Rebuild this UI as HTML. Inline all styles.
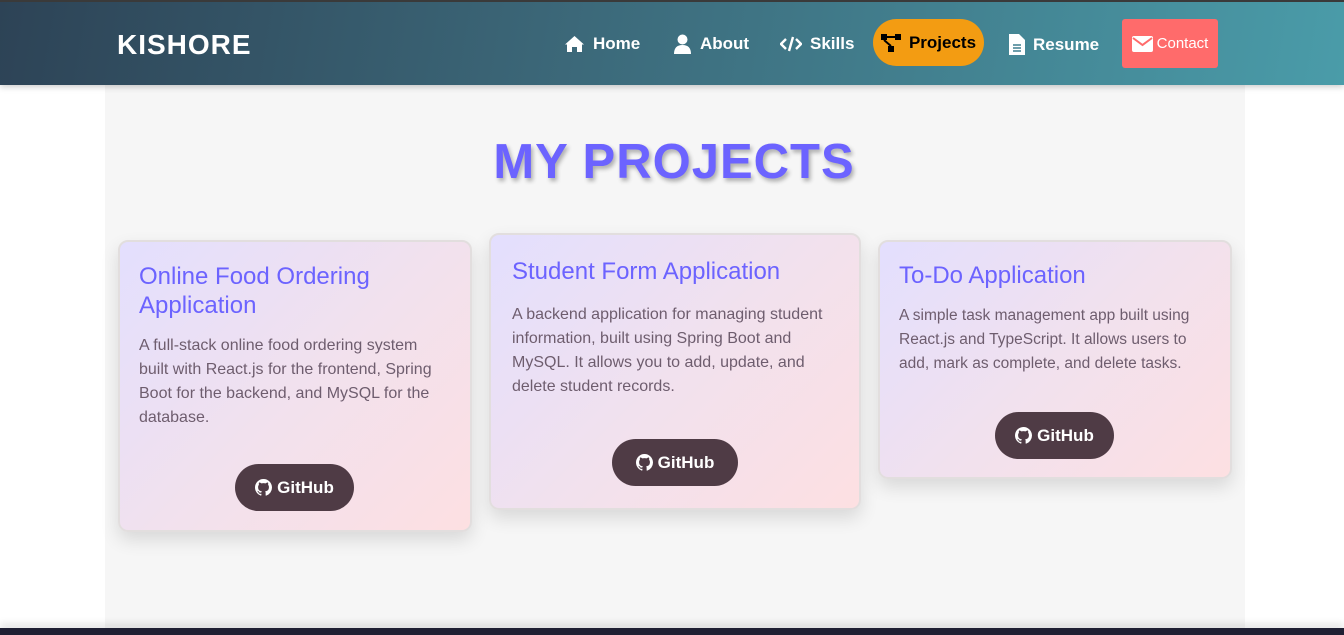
<!DOCTYPE html>
<html><head><meta charset="utf-8"><style>
*{box-sizing:border-box;margin:0;padding:0}
body{width:1344px;height:635px;overflow:hidden;background:#fff;font-family:"Liberation Sans",Arial,sans-serif;position:relative}
.hdr{position:absolute;left:0;top:0;width:1344px;height:85px;border-top:2px solid #3a3a3a;background:linear-gradient(100deg,#2d4356 0%,#3b6677 40%,#4a9ca9 100%);box-shadow:0 2px 6px rgba(0,0,0,.2);z-index:2}
.logo{position:absolute;left:117px;top:27px;color:#fff;font-weight:bold;font-size:28px;letter-spacing:1px}
.ni{position:absolute;display:flex;align-items:center;gap:8px;top:32px;color:#fff;font-weight:bold;font-size:17px}
.proj{position:absolute;left:873px;top:17px;width:111px;height:47px;background:#f39c12;border-radius:24px;color:#000;font-weight:bold;font-size:17px;display:flex;align-items:center;justify-content:center;gap:8px}
.cont{position:absolute;left:1122px;top:17px;width:96px;height:49px;background:#ff6b6b;border-radius:3px;color:#fff;font-size:15px;display:flex;align-items:center;justify-content:center;gap:4px}
.panel{position:absolute;left:105px;top:85px;width:1140px;height:543px;background:#f6f6f6}
.bot{position:absolute;left:0;top:628px;width:1344px;height:7px;background:#1f1f33;box-shadow:0 -4px 8px rgba(0,0,0,.12)}
h1{position:absolute;left:0;width:1348px;top:134px;text-align:center;font-size:49px;font-weight:bold;color:#6c63ff;letter-spacing:1px;text-shadow:2px 3px 4px rgba(0,0,0,.3)}
.card{position:absolute;border:2px solid #e2dede;border-radius:10px;background:linear-gradient(135deg,#e3dffe 0%,#f1e1ee 50%,#fde0e2 100%);box-shadow:0 8px 18px rgba(0,0,0,.12);padding:0 20px 0 19px}
.card h2{font-weight:normal;font-size:24px;color:#6c63ff;line-height:29px}
.card p{font-size:16px;line-height:24px;color:#6e5d6e}
.btn{position:absolute;height:47px;background:#4f3b45;border-radius:24px;color:#fff;font-weight:bold;font-size:17px;display:flex;align-items:center;justify-content:center;gap:5px}
</style></head><body>
<div class="hdr">
<div class="logo">KISHORE</div>
<div class="ni" style="left:564px"><svg width="21" height="18" viewBox="0 0 21 18"><path d="M10.5 1 L1 9.5 L3 9.5 L3 17 L8 17 L8 12 L13 12 L13 17 L18 17 L18 9.5 L20 9.5 Z" fill="#fff"/></svg>Home</div>
<div class="ni" style="left:673px"><svg width="19" height="20" viewBox="0 0 19 20"><circle cx="9.5" cy="5.5" r="5" fill="#fff"/><path d="M1 20 Q1 11 9.5 11 Q18 11 18 20Z" fill="#fff"/></svg>About</div>
<div class="ni" style="left:780px"><svg width="22" height="16" viewBox="0 0 22 16"><path d="M6 3 L1 8 L6 13 M16 3 L21 8 L16 13 M13 1 L9 15" stroke="#fff" stroke-width="2.4" fill="none"/></svg>Skills</div>
<div class="proj"><svg width="20" height="18" viewBox="0 0 20 18"><rect x="0" y="0" width="6" height="6" fill="#000"/><rect x="14" y="0" width="6" height="6" fill="#000"/><rect x="7" y="12" width="6" height="6" fill="#000"/><path d="M6 3 H14 M3 6 L10 12" stroke="#000" stroke-width="2"/></svg>Projects</div>
<div class="ni" style="left:1009px"><svg width="16" height="21" viewBox="0 0 16 21"><path d="M0 0 H10 L16 6 V21 H0Z" fill="#fff"/><path d="M4 11 H12 M4 14 H12 M4 17 H12" stroke="#3f7f8f" stroke-width="1.5"/></svg>Resume</div>
<div class="cont"><svg width="21" height="16" viewBox="0 0 21 16"><rect width="21" height="16" rx="2" fill="#fff"/><path d="M1 2 L10.5 9 L20 2" stroke="#ff6b6b" stroke-width="2" fill="none"/></svg>Contact</div>
</div>
<div class="panel"></div>
<div class="bot"></div>
<h1>MY PROJECTS</h1>
<div class="card" style="left:118px;top:240px;width:354px;height:292px;padding-top:20px">
<h2>Online Food Ordering Application</h2>
<p style="margin-top:14px">A full-stack online food ordering system built with React.js for the frontend, Spring Boot for the backend, and MySQL for the database.</p>
<div class="btn" style="left:115px;top:222px;width:119px"><svg width="17" height="17" viewBox="0 0 16 16"><path fill="#fff" d="M8 0C3.58 0 0 3.58 0 8c0 3.54 2.29 6.53 5.47 7.59.4.07.55-.17.55-.38v-1.33c-2.23.48-2.7-1.07-2.7-1.07-.36-.92-.89-1.17-.89-1.17-.73-.5.06-.49.06-.49.8.06 1.23.83 1.23.83.71 1.23 1.87.87 2.33.66.07-.52.28-.87.5-1.07-1.78-.2-3.64-.89-3.64-3.95 0-.87.31-1.59.82-2.15-.08-.2-.36-1.02.08-2.12 0 0 .67-.21 2.2.82.64-.18 1.32-.27 2-.27.68 0 1.36.09 2 .27 1.53-1.04 2.2-.82 2.2-.82.44 1.1.16 1.92.08 2.12.51.56.82 1.27.82 2.15 0 3.07-1.87 3.75-3.65 3.95.29.25.54.73.54 1.48v2.2c0 .21.15.46.55.38A8.01 8.01 0 0016 8c0-4.42-3.58-8-8-8z"/></svg>GitHub</div>
</div>
<div class="card" style="left:489px;top:233px;width:372px;height:277px;padding-top:22px;padding-left:21px">
<h2>Student Form Application</h2>
<p style="margin-top:17px">A backend application for managing student information, built using Spring Boot and MySQL. It allows you to add, update, and delete student records.</p>
<div class="btn" style="left:121px;top:204px;width:126px"><svg width="17" height="17" viewBox="0 0 16 16"><path fill="#fff" d="M8 0C3.58 0 0 3.58 0 8c0 3.54 2.29 6.53 5.47 7.59.4.07.55-.17.55-.38v-1.33c-2.23.48-2.7-1.07-2.7-1.07-.36-.92-.89-1.17-.89-1.17-.73-.5.06-.49.06-.49.8.06 1.23.83 1.23.83.71 1.23 1.87.87 2.33.66.07-.52.28-.87.5-1.07-1.78-.2-3.64-.89-3.64-3.95 0-.87.31-1.59.82-2.15-.08-.2-.36-1.02.08-2.12 0 0 .67-.21 2.2.82.64-.18 1.32-.27 2-.27.68 0 1.36.09 2 .27 1.53-1.04 2.2-.82 2.2-.82.44 1.1.16 1.92.08 2.12.51.56.82 1.27.82 2.15 0 3.07-1.87 3.75-3.65 3.95.29.25.54.73.54 1.48v2.2c0 .21.15.46.55.38A8.01 8.01 0 0016 8c0-4.42-3.58-8-8-8z"/></svg>GitHub</div>
</div>
<div class="card" style="left:878px;top:240px;width:354px;height:239px;padding-top:19px">
<h2>To-Do Application</h2>
<p style="margin-top:14px;font-size:15.5px">A simple task management app built using React.js and TypeScript. It allows users to add, mark as complete, and delete tasks.</p>
<div class="btn" style="left:115px;top:170px;width:119px"><svg width="17" height="17" viewBox="0 0 16 16"><path fill="#fff" d="M8 0C3.58 0 0 3.58 0 8c0 3.54 2.29 6.53 5.47 7.59.4.07.55-.17.55-.38v-1.33c-2.23.48-2.7-1.07-2.7-1.07-.36-.92-.89-1.17-.89-1.17-.73-.5.06-.49.06-.49.8.06 1.23.83 1.23.83.71 1.23 1.87.87 2.33.66.07-.52.28-.87.5-1.07-1.78-.2-3.64-.89-3.64-3.95 0-.87.31-1.59.82-2.15-.08-.2-.36-1.02.08-2.12 0 0 .67-.21 2.2.82.64-.18 1.32-.27 2-.27.68 0 1.36.09 2 .27 1.53-1.04 2.2-.82 2.2-.82.44 1.1.16 1.92.08 2.12.51.56.82 1.27.82 2.15 0 3.07-1.87 3.75-3.65 3.95.29.25.54.73.54 1.48v2.2c0 .21.15.46.55.38A8.01 8.01 0 0016 8c0-4.42-3.58-8-8-8z"/></svg>GitHub</div>
</div>
</body></html>
